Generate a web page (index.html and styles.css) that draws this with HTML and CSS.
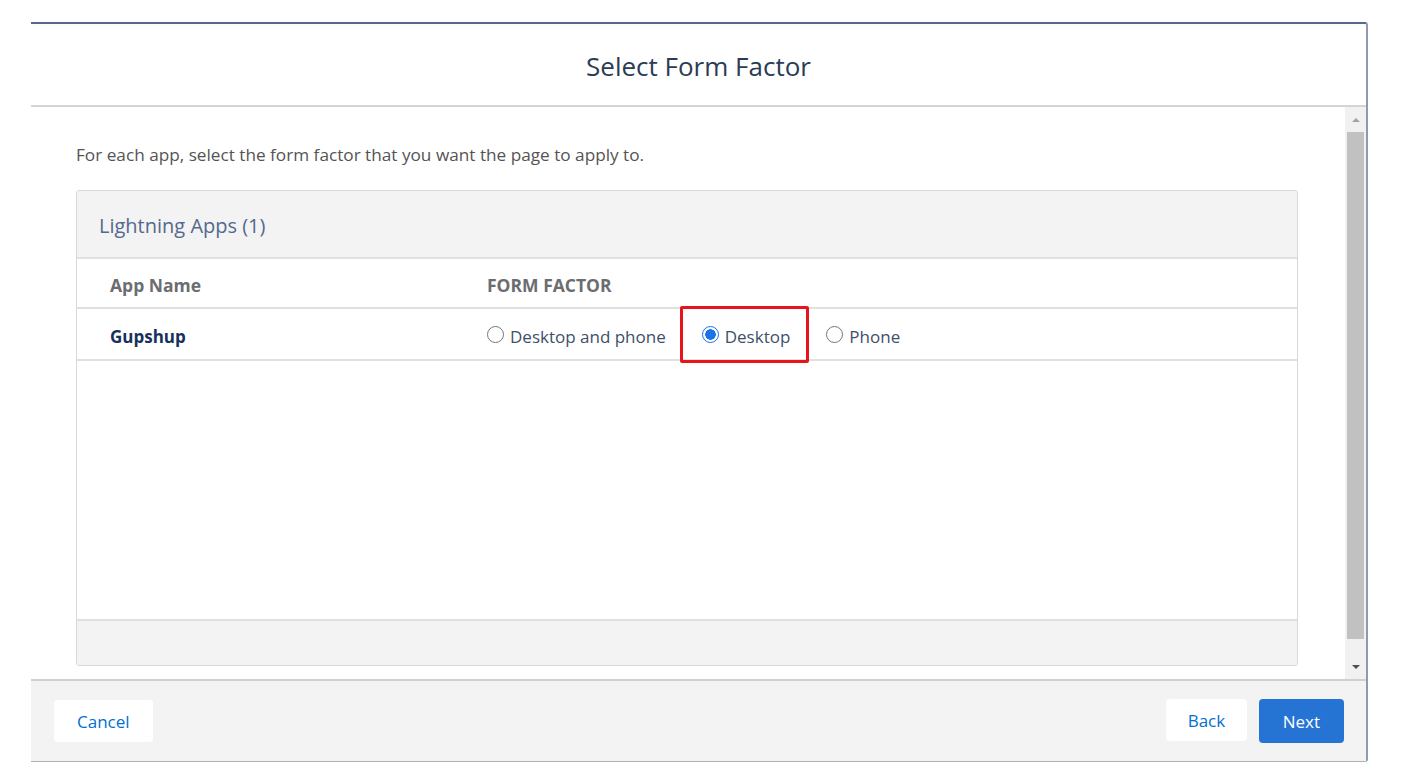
FILE: index.html
```html
<!DOCTYPE html>
<html lang="en">
<head>
  <meta charset="UTF-8">
  <meta name="viewport" content="width=device-width, initial-scale=1.0">
  <title>Select Form Factor</title>
  <link rel="stylesheet" href="styles.css">
</head>
<body>
  <div class="modal">
    <header class="modal__header">
      <h2 class="modal__title">Select Form Factor</h2>
    </header>

    <div class="modal__body">
      <div class="modal__content">
        <p class="intro">For each app, select the form factor that you want the page to apply to.</p>

        <div class="card">
          <div class="card__header">Lightning Apps (1)</div>
          <div class="row row--head">
            <div class="cell">App Name</div>
            <div class="cell">FORM FACTOR</div>
          </div>
          <div class="row">
            <div class="cell cell--name">Gupshup</div>
            <div class="cell options">
              <label class="option">
                <input type="radio" name="factor" class="radio">
                <span>Desktop and phone</span>
              </label>
              <label class="option option--marked">
                <input type="radio" name="factor" class="radio" checked>
                <span>Desktop</span>
              </label>
              <label class="option">
                <input type="radio" name="factor" class="radio">
                <span>Phone</span>
              </label>
            </div>
          </div>
          <div class="card__empty"></div>
          <div class="card__footer"></div>
        </div>
      </div>

      <div class="scrollbar">
        <span class="scrollbar__arrow scrollbar__arrow--up"></span>
        <span class="scrollbar__thumb"></span>
        <span class="scrollbar__arrow scrollbar__arrow--down"></span>
      </div>
    </div>

    <footer class="modal__footer">
      <button class="btn" type="button">Cancel</button>
      <div class="modal__actions">
        <button class="btn btn--back" type="button">Back</button>
        <button class="btn btn--brand" type="button">Next</button>
      </div>
    </footer>
  </div>
</body>
</html>
```

FILE: styles.css
```css
:root {
  --color-navy: #16325c;
  --color-text: #3e4f6b;
  --color-gray: #6b6d70;
  --color-border: #d8d8d8;
  --color-shade: #f3f3f3;
  --color-blue: #0070d2;
}
*,
*::after,
*::before {
  box-sizing: border-box;
}
body {
  margin: 0;
  padding: 22px 0 0 31px;
  background: #fff;
  font-family: 'Open Sans', 'Noto Sans', sans-serif;
  color: var(--color-text);
}
.modal {
  width: 1337px;
  height: 740px;
  display: flex;
  flex-direction: column;
  border-top: 2px solid #56698a;
  border-right: 2px solid #8d9bb0;
  border-bottom: 1px solid #a9b1bb;
  border-top-right-radius: 3px;
  border-bottom-right-radius: 3px;
  background: #fff;
}
.modal__header {
  height: 83px;
  display: flex;
  align-items: center;
  justify-content: center;
  border-bottom: 2px solid #d4d4d4;
}
.modal__title {
  margin: 2px 0 0 0;
  font-size: 26px;
  font-weight: 400;
  color: #2b3c55;
}
.modal__body {
  flex: 1;
  display: flex;
  min-height: 0;
}
.modal__content {
  flex: 1;
  display: flex;
  flex-direction: column;
  padding: 37px 47px 13px 45px;
}
.intro {
  margin: 0 0 24px 0;
  font-size: 17.2px;
  line-height: 22px;
  color: #545454;
}
.card {
  flex: 1;
  display: flex;
  flex-direction: column;
  border: 1px solid var(--color-border);
  border-radius: 3px;
  overflow: hidden;
}
.card__header {
  height: 68px;
  flex-shrink: 0;
  display: flex;
  align-items: center;
  padding: 2px 22px 0 22px;
  background: var(--color-shade);
  border-bottom: 2px solid #e0e0e0;
  font-size: 20px;
  color: #54698d;
}
.row {
  height: 52px;
  flex-shrink: 0;
  display: grid;
  grid-template-columns: 377px 1fr;
  align-items: center;
  padding-left: 33px;
  border-bottom: 2px solid #e0e0e0;
}
.row--head {
  height: 50px;
  padding-top: 3px;
  font-size: 17.5px;
  font-weight: 700;
  color: var(--color-gray);
}
.cell--name {
  font-size: 17px;
  font-weight: 700;
  color: var(--color-navy);
}
.options {
  display: flex;
  align-items: center;
  gap: 13px;
}
.option {
  display: flex;
  align-items: center;
  gap: 6px;
  font-size: 17px;
  color: var(--color-text);
}
.option--marked {
  height: 57px;
  margin: -3px 4px 0 1px;
  padding: 3px 16px 0 19px;
  border: 3px solid #e8141b;
  border-radius: 2px;
}
.radio {
  appearance: none;
  margin: 0 0 3px 0;
  width: 17px;
  height: 17px;
  border: 1px solid #767676;
  border-radius: 50%;
  background: #fff;
}
.radio:checked {
  border-color: #1a73e8;
  background: radial-gradient(circle, #1a73e8 0 5px, #fff 5.5px);
}
.card__empty {
  flex: 1;
  border-bottom: 2px solid #e0e0e0;
}
.card__footer {
  height: 44px;
  flex-shrink: 0;
  background: var(--color-shade);
}
.scrollbar {
  width: 21px;
  display: flex;
  flex-direction: column;
  align-items: center;
  background: #f1f1f1;
}
.scrollbar__arrow {
  height: 25px;
  display: flex;
  align-items: center;
}
.scrollbar__arrow::before {
  content: '';
  border-left: 4px solid transparent;
  border-right: 4px solid transparent;
}
.scrollbar__arrow--up::before {
  border-bottom: 4px solid #a3a3a3;
}
.scrollbar__arrow--down {
  margin-top: auto;
}
.scrollbar__arrow--down::before {
  border-top: 4px solid #505050;
}
.scrollbar__thumb {
  width: 17px;
  height: 507px;
  background: #c1c1c1;
}
.modal__footer {
  height: 82px;
  flex-shrink: 0;
  display: flex;
  align-items: center;
  justify-content: space-between;
  padding: 0 22px 0 23px;
  background: var(--color-shade);
  border-top: 2px solid #d0d0d0;
}
.modal__actions {
  display: flex;
  gap: 12px;
}
.btn {
  height: 42px;
  padding: 0 23px;
  border: 0;
  border-radius: 4px;
  background: #fff;
  font-family: inherit;
  font-size: 17px;
  color: var(--color-blue);
}
.btn--back {
  padding: 0 21.5px;
}
.btn--brand {
  height: 44px;
  padding: 0 24px;
  background: #2574d4;
  color: #fff;
}
```
